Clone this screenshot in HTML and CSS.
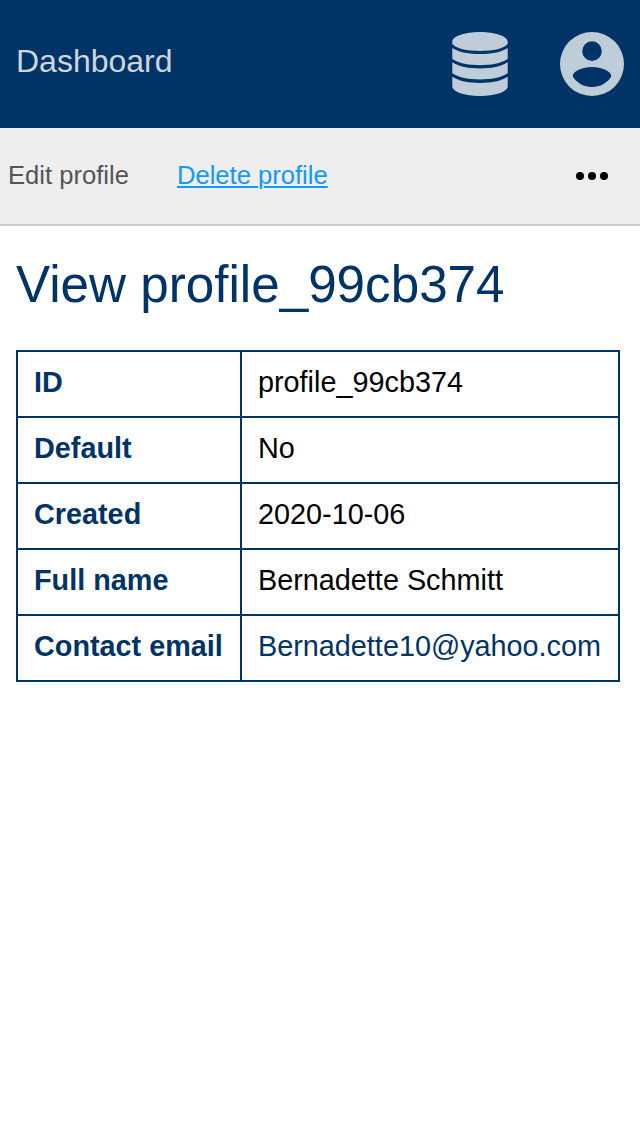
FILE: index.html
```html
<!DOCTYPE html>
<html lang="en">
<head>
<meta charset="utf-8">
<title>View profile_99cb374</title>
<link rel="stylesheet" href="styles.css">
</head>
<body>
<header class="topbar">
  <a class="brand">Dashboard</a>
  <svg class="icon-db" viewBox="0 0 56 64"><path d="M.3 9.500C.3 4.500 12.500 0 28 0S55.700 4.500 55.700 9.500V12C52 16.500 41 18.900 28 18.900S4 16.500.3 12ZM.3 16C7 20.500 17 22 28 22S49 20.500 55.700 16V27C49 31.500 39 33.200 28 33.200S7 31.500.3 27ZM.3 30.300C7 34.800 17 36.500 28 36.500S49 34.800 55.700 30.300V41.300C49 45.800 39 47.500 28 47.500S7 45.800.3 41.300ZM.3 44.700C7 49.200 17 50.900 28 50.900S49 49.200 55.700 44.700V54.500C55.700 59.500 43.500 64 28 64S.3 59.500.3 54.500Z"/></svg>
  <svg class="icon-user" viewBox="0 0 64 64"><path fill-rule="evenodd" d="M32 0A32 32 0 1 1 32 64A32 32 0 1 1 32 0ZM32 9.300A9.800 9.800 0 1 0 32 28.900A9.800 9.800 0 1 0 32 9.300ZM32 35C22 35 12.700 39.500 12.700 44.300C16.500 51 24 55.100 32 55.100S47.500 51 51.300 44.300C51.300 39.500 42 35 32 35Z"/></svg>
</header>
<nav class="actions">
  <a class="action">Edit profile</a>
  <a class="action action-active">Delete profile</a>
  <svg class="icon-more" viewBox="0 0 32 8"><circle cx="4" cy="4" r="4"/><circle cx="16" cy="4" r="4"/><circle cx="28" cy="4" r="4"/></svg>
</nav>
<main class="content">
  <h1 class="title">View profile_99cb374</h1>
  <table class="details">
    <tr><th>ID</th><td>profile_99cb374</td></tr>
    <tr><th>Default</th><td>No</td></tr>
    <tr><th>Created</th><td>2020-10-06</td></tr>
    <tr><th>Full name</th><td>Bernadette Schmitt</td></tr>
    <tr><th>Contact email</th><td><a class="mail">Bernadette10@yahoo.com</a></td></tr>
  </table>
</main>
</body>
</html>
```
FILE: styles.css
```css
* { box-sizing: border-box; }
body { margin: 0; background: #fff; color: #000; font-family: "Liberation Sans", Arial, sans-serif; }
.topbar { display: flex; align-items: center; height: 128px; padding: 0 16px; background: #003366; }
.brand { flex: 1; font-size: 32px; line-height: 36px; padding-bottom: 6px; color: #ccd6de; }
.icon-db { width: 56px; height: 64px; margin-right: 52px; fill: #bfccd9; }
.icon-user { width: 64px; height: 64px; fill: #bfccd9; }
.actions { display: flex; align-items: center; height: 98px; padding: 0 32px 0 8px; background: #eee; border-bottom: 2px solid #ccc; }
.action { margin-right: 48px; font-size: 25.6px; line-height: 30px; padding-bottom: 2px; color: #555; }
.action-active { color: #1199ff; text-decoration: underline; text-decoration-thickness: 2px; text-underline-offset: 2px; }
.icon-more { width: 32px; height: 8px; margin-left: auto; }
.content { padding: 29px 16px; }
.title { margin: 0 0 36px; font-size: 51.2px; line-height: 59px; font-weight: 400; color: #003366; }
.details { width: 604px; border-collapse: collapse; font-size: 28.8px; line-height: 32px; }
.details th, .details td { height: 66px; padding: 0 16px 4px; border: 2px solid #003366; text-align: left; white-space: nowrap; }
.details th { width: 224px; color: #003366; }
.mail { color: #003366; }
```
